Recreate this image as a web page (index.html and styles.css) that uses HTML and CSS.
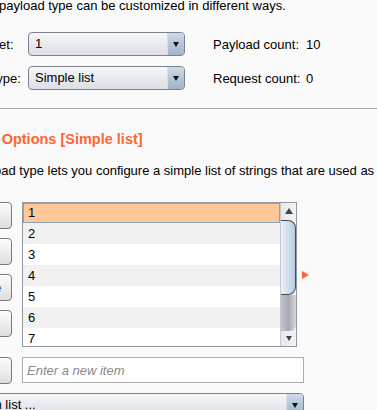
FILE: index.html
```html
<!DOCTYPE html>
<html>
<head>
<meta charset="utf-8">
<link rel="stylesheet" href="styles.css">
</head>
<body>
<div class="page">
  <p class="intro">and each payload type can be customized in different ways.</p>

  <div class="form">
    <span class="label">Payload set:</span>
    <div class="combo"><span class="combo-text">1</span><span class="combo-btn"><i class="tri-down"></i></span></div>
    <span class="count-label">Payload count:</span>
    <span class="count-value">10</span>

    <span class="label">Payload type:</span>
    <div class="combo"><span class="combo-text">Simple list</span><span class="combo-btn"><i class="tri-down"></i></span></div>
    <span class="count-label">Request count:</span>
    <span class="count-value">0</span>
  </div>
</div>

<hr class="sep">

<div class="page">
  <h2 class="heading">Payload Options [Simple list]</h2>
  <p class="desc">This payload type lets you configure a simple list of strings that are used as payloads.</p>

  <div class="list-area">
    <div class="buttons">
      <button class="btn">Paste</button>
      <button class="btn">Load ...</button>
      <button class="btn">Remove</button>
      <button class="btn">Clear</button>
    </div>
    <div class="listbox">
      <div class="rows">
        <div class="row selected">1</div>
        <div class="row alt">2</div>
        <div class="row">3</div>
        <div class="row alt">4</div>
        <div class="row">5</div>
        <div class="row alt">6</div>
        <div class="row">7</div>
      </div>
      <div class="scrollbar">
        <div class="sb-arrow"><i class="tri-up"></i></div>
        <div class="sb-thumb"></div>
        <div class="sb-track"></div>
        <div class="sb-arrow"><i class="tri-down gray"></i></div>
      </div>
    </div>
    <i class="tri-right"></i>
  </div>

  <div class="add-row">
    <button class="btn">Add</button>
    <input class="new-item" type="text" placeholder="Enter a new item">
  </div>

  <div class="combo wide"><span class="combo-text">Add from list ...</span><span class="combo-btn"><i class="tri-down"></i></span></div>
</div>
</body>
</html>
```

FILE: styles.css
```css
html, body {
  margin: 0;
  padding: 0;
  background: #fafafa;
  overflow: hidden;
  width: 377px;
  height: 410px;
}

body {
  font-family: "Liberation Sans", Arial, sans-serif;
  font-size: 13px;
  color: #000;
}

.page {
  margin-left: -58px;
  width: 520px;
}

.intro {
  margin: -2px 0 0 0;
  line-height: 15px;
  white-space: nowrap;
}

.form {
  margin-top: 19px;
  display: grid;
  grid-template-columns: 86px 157px 121px auto;
  grid-auto-rows: 24px;
  row-gap: 10px;
  align-items: center;
  white-space: nowrap;
}

.count-label {
  padding-left: 28px;
}

.combo {
  display: flex;
  height: 24px;
  box-sizing: border-box;
  border: 1px solid #7c8190;
  border-radius: 4px;
  overflow: hidden;
  background: linear-gradient(#f6f7f9, #e7e9ee 55%, #dcdfe5);
}

.combo-text {
  flex: 1;
  padding-left: 6px;
  line-height: 22px;
  white-space: nowrap;
}

.combo-btn {
  width: 16px;
  border-left: 1px solid #d5dde6;
  background: linear-gradient(#cfdae6, #b3c4d5 55%, #a3b6c9);
  display: flex;
  align-items: center;
  justify-content: center;
}

.tri-down {
  display: block;
  width: 0;
  height: 0;
  border-left: 3.5px solid transparent;
  border-right: 3.5px solid transparent;
  border-top: 5px solid #111;
}

.tri-down.gray {
  border-top-color: #444;
}

.tri-up {
  display: block;
  width: 0;
  height: 0;
  border-left: 4px solid transparent;
  border-right: 4px solid transparent;
  border-bottom: 6px solid #444;
}

.sep {
  margin: 18px 0 0 0;
  border: 0;
  border-top: 1px solid #a9a9b2;
  height: 0;
}

.heading {
  margin: 22px 0 0 0;
  font-size: 14.5px;
  line-height: 17px;
  font-weight: bold;
  color: #ff6633;
  white-space: nowrap;
}

.desc {
  margin: 15px 0 0 0;
  line-height: 15px;
  white-space: nowrap;
}

.list-area {
  margin-top: 24px;
  display: flex;
  align-items: flex-start;
}

.buttons {
  width: 70px;
  display: flex;
  flex-direction: column;
  gap: 9px;
}

.btn {
  width: 70px;
  height: 27px;
  padding: 0;
  font-family: "Liberation Sans", Arial, sans-serif;
  font-size: 13px;
  color: #000;
  border: 1px solid #7a7a7a;
  border-radius: 4px;
  background: linear-gradient(#fbfbfb, #eeeeee 50%, #dddddd);
  box-shadow: inset 0 1px 0 #fff;
}

.listbox {
  margin-left: 10px;
  width: 275px;
  height: 145px;
  box-sizing: border-box;
  border: 1px solid #9298a4;
  background: #fff;
  display: flex;
  overflow: hidden;
}

.rows {
  flex: 1;
  overflow: hidden;
}

.row {
  height: 21px;
  line-height: 21px;
  padding-left: 5px;
  background: #fff;
}

.row.alt {
  background: #f1f1f1;
}

.row.selected {
  height: 20px;
  line-height: 18px;
  box-sizing: border-box;
  border: 1px solid #8aa2c2;
  padding-left: 4px;
  background: #ffc896;
}

.scrollbar {
  width: 15px;
  display: flex;
  flex-direction: column;
  border-left: 1px solid #c6c9cf;
  background: linear-gradient(90deg, #e6e7ea, #f4f4f6);
}

.sb-arrow {
  height: 15px;
  display: flex;
  align-items: center;
  justify-content: center;
}

.sb-thumb {
  margin-top: 2px;
  height: 75px;
  box-sizing: border-box;
  border: 1px solid #3e4d5c;
  border-left: 0;
  border-radius: 0 8px 8px 0;
  background: linear-gradient(90deg, #eaf1f8, #d3e1ee 45%, #b9cde0);
}

.sb-track {
  flex: 1;
  background: linear-gradient(90deg, #c3c4ca, #a9abb3 50%, #d6d7db);
  border-radius: 0 0 6px 0;
}

.tri-right {
  display: block;
  margin-top: 69px;
  margin-left: 5px;
  width: 0;
  height: 0;
  border-top: 4.5px solid transparent;
  border-bottom: 4.5px solid transparent;
  border-left: 7px solid #ff6633;
}

.add-row {
  margin-top: 10px;
  display: flex;
  align-items: flex-start;
  gap: 10px;
}

.new-item {
  width: 282px;
  height: 26px;
  box-sizing: border-box;
  margin: 0;
  border: 1px solid #adadad;
  padding: 0 4px;
  font-family: "Liberation Sans", Arial, sans-serif;
  font-size: 13px;
  background: #fff;
  outline: none;
}

.new-item::placeholder {
  font-style: italic;
  color: #8a8a8a;
}

.combo.wide {
  margin-top: 9px;
  width: 362px;
}
```
